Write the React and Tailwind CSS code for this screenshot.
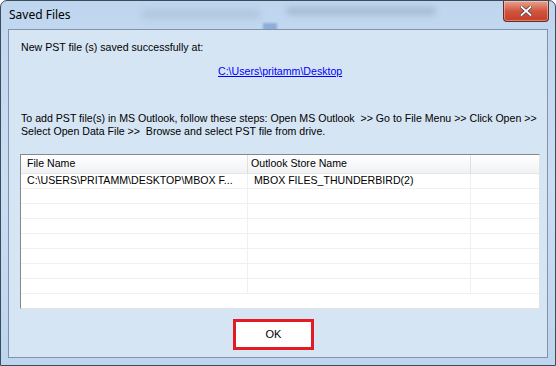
export default function App() {
  const rows = Array.from({ length: 8 });
  return (
    <div className="relative h-[366px] w-[556px] overflow-hidden rounded-t-[7px] border border-[#3d4a5a] bg-gradient-to-b from-[#bfd6ef] via-[#cadef3] to-[#bdd5ee] font-['Liberation_Sans',Arial,sans-serif] text-[10.6px] text-black">
      {/* blurred background behind aero title bar */}
      <div className="pointer-events-none absolute left-[140px] top-[8px] h-[10px] w-[120px] rounded-full bg-[#9fb3c9] opacity-40 blur-[3px]" />
      <div className="pointer-events-none absolute left-[285px] top-[6px] h-[8px] w-[150px] rounded-full bg-[#8193a8] opacity-40 blur-[3px]" />
      <div className="pointer-events-none absolute left-[262px] top-[22px] h-[8px] w-[14px] bg-[#5f86bd] opacity-50 blur-[1px]" />

      {/* title bar */}
      <div className="relative flex h-[28px] items-center justify-between">
        <span className="pl-[8px] font-['Noto_Sans',sans-serif] text-[12px] text-black">
          Saved Files
        </span>
        <button className="mr-[6px] flex h-[21px] w-[46px] items-center justify-center self-start rounded-b-[4px] border border-t-0 border-[#6b2a22] bg-gradient-to-b from-[#e8a290] via-[#d0553f] to-[#c43f28] shadow-[inset_0_0_0_1px_rgba(255,255,255,0.35)]">
          <svg width="12" height="10" viewBox="0 0 12 10">
            <path
              d="M1.5 1 L10.5 9 M10.5 1 L1.5 9"
              stroke="#4a3a3a"
              strokeWidth="3.2"
              strokeLinecap="square"
            />
            <path
              d="M1.5 1 L10.5 9 M10.5 1 L1.5 9"
              stroke="#ffffff"
              strokeWidth="1.8"
              strokeLinecap="square"
            />
          </svg>
        </button>
      </div>

      {/* client area */}
      <div className="relative mx-[7px] h-[329px] border border-[#8193a9] bg-[#d6e5f4]">
        <div className="pl-[12px] pt-[11px] leading-[13px]">
          New PST file (s) saved successfully at:
        </div>
        <div className="mt-[11px] pl-[209px] leading-[13px]">
          <a href="#" className="text-[#0000ff] underline">
            C:\Users\pritamm\Desktop
          </a>
        </div>
        <div className="mt-[34px] whitespace-nowrap pl-[12px] leading-[13px]">
          To add PST file(s) in MS Outlook, follow these steps: Open MS Outlook&nbsp; &gt;&gt; Go to File Menu &gt;&gt; Click Open &gt;&gt;
          <br />
          Select Open Data File &gt;&gt;&nbsp; Browse and select PST file from drive.
        </div>

        {/* list view */}
        <div className="ml-[11px] mt-[16px] h-[155px] w-[520px] overflow-hidden border border-t-[#828790] border-l-[#828790] border-r-[#e3e3e3] border-b-[#e3e3e3] bg-white">
          <div className="grid h-[19px] grid-cols-[227px_223px_1fr] border-b border-[#e5e5e5] bg-gradient-to-b from-white to-[#f1f2f4]">
            <div className="flex items-center border-r border-[#dcdfe4] pl-[6px]">File Name</div>
            <div className="flex items-center border-r border-[#dcdfe4] pl-[3px]">Outlook Store Name</div>
            <div />
          </div>
          {rows.map((_, i) => (
            <div
              key={i}
              className="grid h-[15px] grid-cols-[227px_223px_1fr] border-b border-[#f0f0f0]"
            >
              <div className="flex items-center overflow-hidden whitespace-nowrap border-r border-[#f0f0f0] pl-[6px]">
                {i === 0 ? "C:\\USERS\\PRITAMM\\DESKTOP\\MBOX F..." : ""}
              </div>
              <div className="flex items-center overflow-hidden whitespace-nowrap border-r border-[#f0f0f0] pl-[6px]">
                {i === 0 ? "MBOX FILES_THUNDERBIRD(2)" : ""}
              </div>
              <div />
            </div>
          ))}
        </div>

        <div className="ml-[224px] mt-[10px] w-fit border-[3px] border-[#e21b24]">
          <button className="flex h-[25px] w-[75px] items-center justify-center bg-white text-[11px]">
            OK
          </button>
        </div>
      </div>
    </div>
  );
}
